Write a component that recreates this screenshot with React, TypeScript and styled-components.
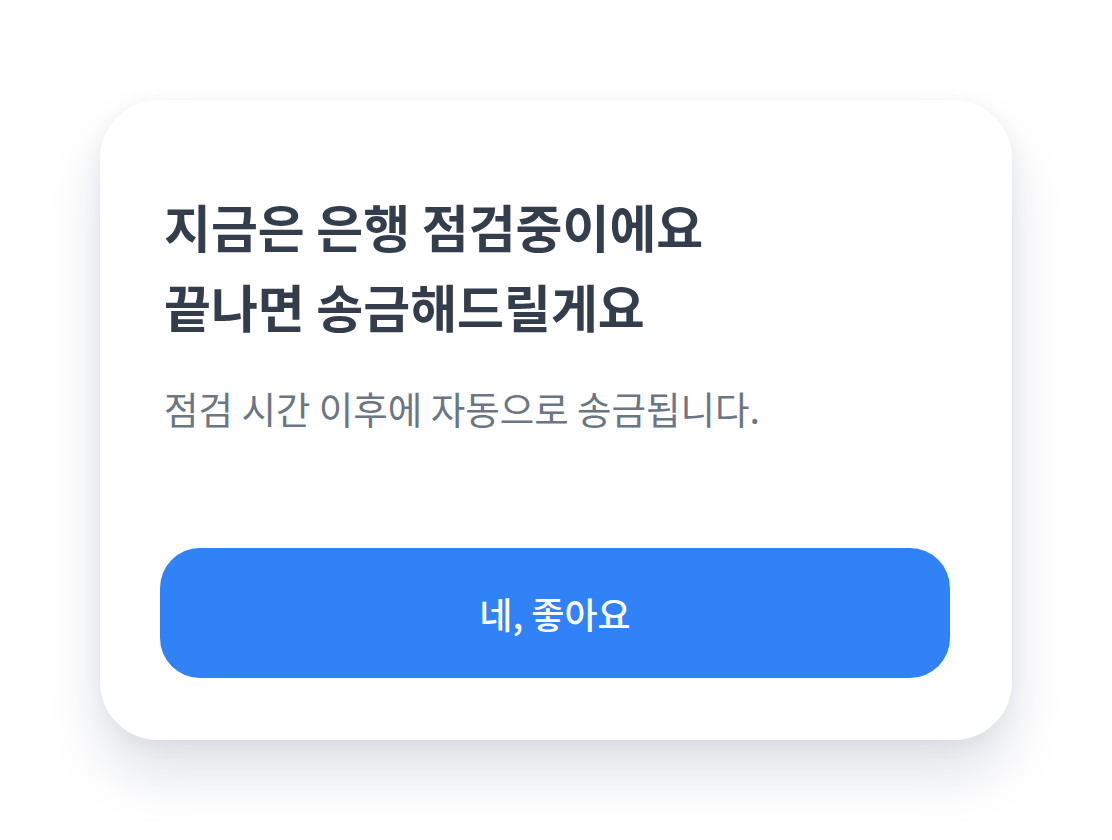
import { createGlobalStyle, styled } from 'styled-components';

const GlobalStyle = createGlobalStyle`
    html, body {
        margin: 0;
        padding: 0;
        background: #ffffff;
    }
    body {
        font-family: 'Noto Sans CJK KR', 'Noto Sans', sans-serif;
        -webkit-font-smoothing: antialiased;
    }
`;

const App = () => {
    return (
        <Page>
            <GlobalStyle />
            <Dialog>
                <Title>
                    지금은 은행 점검중이에요
                    <br />
                    끝나면 송금해드릴게요
                </Title>
                <Description>점검 시간 이후에 자동으로 송금됩니다.</Description>
                <ConfirmButton type="button">네, 좋아요</ConfirmButton>
            </Dialog>
        </Page>
    );
};

export default App;

const Page = styled.div`
    width: 1112px;
    height: 840px;
    padding: 100px;
    box-sizing: border-box;
`;

const Dialog = styled.div`
    width: 912px;
    height: 640px;
    box-sizing: border-box;
    padding: 86px 62px 62px 60px;
    display: flex;
    flex-direction: column;
    background: #ffffff;
    border-radius: 58px;
    box-shadow: 0 34px 56px rgba(2, 32, 71, 0.13), 0 4px 20px rgba(2, 32, 71, 0.05);
`;

const Title = styled.h1`
    margin: 0;
    padding-left: 4px;
    font-size: 51px;
    line-height: 80px;
    font-weight: 700;
    color: #333d4b;
`;

const Description = styled.p`
    margin: 37px 0 0;
    padding-left: 4px;
    font-size: 37.5px;
    line-height: 50px;
    font-weight: 400;
    color: #6b7684;
`;

const ConfirmButton = styled.button`
    margin-top: auto;
    width: 100%;
    height: 130px;
    border: none;
    border-radius: 40px;
    background: #3182f6;
    color: #ffffff;
    font-family: inherit;
    font-size: 36px;
    font-weight: 500;
    cursor: pointer;
`;
